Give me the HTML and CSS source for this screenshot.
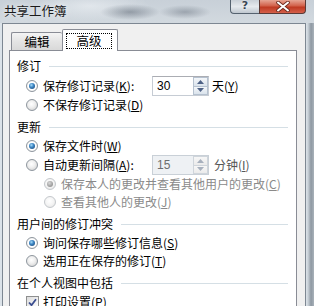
FILE: index.html
```html
<!DOCTYPE html>
<html lang="zh-CN">
<head>
<meta charset="utf-8">
<title>共享工作簿</title>
<link rel="stylesheet" href="styles.css">
</head>
<body>
<div class="window">
  <div class="titlebar">
    <span class="title">共享工作簿</span>
    <div class="caption-btns">
      <div class="btn-help">?</div>
      <div class="btn-close">
        <svg width="14" height="11" viewBox="0 0 14 11">
          <path d="M2 1.5 L12 9.5 M12 1.5 L2 9.5" stroke="#6b2a1e" stroke-width="3.6" stroke-linecap="round"/>
          <path d="M2 1.5 L12 9.5 M12 1.5 L2 9.5" stroke="#ffffff" stroke-width="2" stroke-linecap="round"/>
        </svg>
      </div>
    </div>
  </div>
  <div class="frame-body">
    <div class="client">
      <div class="tabs">
        <div class="tab">编辑</div>
        <div class="tab active"><span class="focus">高级</span></div>
      </div>
      <div class="panel">
        <div class="group">
          <div class="group-head"><span>修订</span><span class="rule"></span></div>
          <div class="row spin-row">
            <span class="radio checked"></span>
            <span class="label fixed">保存修订记录(<u>K</u>):</span>
            <div class="spin">
              <span class="spin-text">30</span>
              <span class="spin-btns">
                <span class="spin-up"><svg width="7" height="4" viewBox="0 0 7 4"><path d="M0 4 L3.5 0 L7 4 Z" fill="#4d6185"/></svg></span>
                <span class="spin-down"><svg width="7" height="4" viewBox="0 0 7 4"><path d="M0 0 L3.5 4 L7 0 Z" fill="#4d6185"/></svg></span>
              </span>
            </div>
            <span class="label after">天(<u>Y</u>)</span>
          </div>
          <div class="row">
            <span class="radio"></span>
            <span class="label">不保存修订记录(<u>D</u>)</span>
          </div>
        </div>
        <div class="group">
          <div class="group-head"><span>更新</span><span class="rule"></span></div>
          <div class="row">
            <span class="radio checked"></span>
            <span class="label">保存文件时(<u>W</u>)</span>
          </div>
          <div class="row spin-row">
            <span class="radio"></span>
            <span class="label fixed">自动更新间隔(<u>A</u>):</span>
            <div class="spin disabled">
              <span class="spin-text">15</span>
              <span class="spin-btns">
                <span class="spin-up"><svg width="7" height="4" viewBox="0 0 7 4"><path d="M0 4 L3.5 0 L7 4 Z" fill="#a7b0bd"/></svg></span>
                <span class="spin-down"><svg width="7" height="4" viewBox="0 0 7 4"><path d="M0 0 L3.5 4 L7 0 Z" fill="#a7b0bd"/></svg></span>
              </span>
            </div>
            <span class="label after dim">分钟(<u>I</u>)</span>
          </div>
          <div class="row sub">
            <span class="radio checked disabled"></span>
            <span class="label off">保存本人的更改并查看其他用户的更改(<u>C</u>)</span>
          </div>
          <div class="row sub">
            <span class="radio disabled"></span>
            <span class="label off">查看其他人的更改(<u>J</u>)</span>
          </div>
        </div>
        <div class="group">
          <div class="group-head"><span>用户间的修订冲突</span><span class="rule"></span></div>
          <div class="row">
            <span class="radio checked"></span>
            <span class="label">询问保存哪些修订信息(<u>S</u>)</span>
          </div>
          <div class="row">
            <span class="radio"></span>
            <span class="label">选用正在保存的修订(<u>T</u>)</span>
          </div>
        </div>
        <div class="group">
          <div class="group-head"><span>在个人视图中包括</span><span class="rule"></span></div>
          <div class="row">
            <span class="check">
              <svg width="9" height="9" viewBox="0 0 9 9"><path d="M1 4.5 L3.5 7.2 L8 1.2" stroke="#3a4d8f" stroke-width="1.8" fill="none"/></svg>
            </span>
            <span class="label">打印设置(<u>P</u>)</span>
          </div>
        </div>
      </div>
    </div>
  </div>
</div>
</body>
</html>
```

FILE: styles.css
```css
html, body {
  margin: 0;
  padding: 0;
}

body {
  width: 314px;
  height: 306px;
  overflow: hidden;
  font-family: "Noto Sans CJK SC", "DejaVu Sans", sans-serif;
  font-size: 12px;
  color: #000;
}

.window {
  width: 314px;
  height: 306px;
  display: flex;
  flex-direction: column;
  background:
    linear-gradient(to right, #dce3e9 0px, #dce3e9 306px, #c9d1d8 308px, #8e98a2 311px, #a9b2ba 314px);
}

.titlebar {
  height: 23px;
  flex: none;
  display: flex;
  align-items: flex-start;
  justify-content: space-between;
  padding: 0 8px 0 4px;
  background:
    radial-gradient(ellipse 30px 8px at 130px 12px, rgba(95, 105, 118, 0.55), rgba(95, 105, 118, 0) 100%),
    radial-gradient(ellipse 26px 7px at 185px 12px, rgba(95, 105, 118, 0.45), rgba(95, 105, 118, 0) 100%),
    radial-gradient(ellipse 60px 14px at 90px 6px, rgba(240, 244, 247, 0.6), rgba(240, 244, 247, 0) 100%),
    linear-gradient(to bottom, #c8d0d8, #d2d9df);
}

.title {
  line-height: 21px;
  font-size: 12.5px;
  color: #1a1a1a;
  text-shadow: 0 0 6px rgba(255, 255, 255, 0.9);
}

.caption-btns {
  display: flex;
  height: 14px;
}

.btn-help {
  width: 29px;
  height: 14px;
  box-sizing: border-box;
  border: 1px solid #55626f;
  border-top: none;
  border-right: none;
  border-bottom-left-radius: 4px;
  background: linear-gradient(to bottom, #c9d0d7, #e6eaee 50%, #bfc7cf);
  text-align: center;
  font-family: "DejaVu Sans", sans-serif;
  font-weight: bold;
  font-size: 11px;
  line-height: 12px;
  color: #3a4654;
  text-shadow: 0 0 2px #fff;
}

.btn-close {
  width: 47px;
  height: 14px;
  box-sizing: border-box;
  border: 1px solid #5a3a36;
  border-top: none;
  border-bottom-right-radius: 4px;
  background: linear-gradient(to bottom, #e6a594, #d2614a 45%, #bf3a22 55%, #d4604a);
  display: flex;
  align-items: center;
  justify-content: center;
}

.frame-body {
  flex: 1;
  display: flex;
  padding: 0 8px 0 2px;
  min-height: 0;
}

.client {
  flex: 1;
  display: flex;
  flex-direction: column;
  background: #f0f0f0;
  border: 1px solid #7d8792;
  border-bottom: none;
  min-height: 0;
}

.tabs {
  display: flex;
  align-items: flex-start;
  padding: 5px 0 0 8px;
  margin-bottom: -1px;
}

.tab {
  box-sizing: border-box;
  width: 51px;
  height: 18px;
  margin-top: 3px;
  border: 1px solid #898c95;
  border-bottom: none;
  border-right: none;
  border-radius: 2px 2px 0 0;
  background: linear-gradient(to bottom, #f4f4f4, #e4e4e4 50%, #d9d9d9);
  text-align: center;
  line-height: 17px;
  font-size: 12.5px;
}

.tab.active {
  width: 56px;
  height: 22px;
  margin-top: 0;
  margin-left: 0;
  border-right: 1px solid #898c95;
  background: #ffffff;
  position: relative;
  z-index: 1;
  display: flex;
  justify-content: flex-start;
  padding: 3px 0 0 3px;
}

.focus {
  display: block;
  box-sizing: border-box;
  width: 46px;
  height: 16px;
  border: 1px dotted #000;
  line-height: 14px;
  text-align: center;
}

.panel {
  flex: 1;
  margin: 0 8px 0 6px;
  background: #ffffff;
  border: 1px solid #898c95;
  border-bottom: none;
  padding: 5px 8px 0 7px;
}

.group + .group {
  margin-top: 3px;
}

.group-head {
  display: flex;
  align-items: center;
  height: 20px;
  line-height: 20px;
}

.rule {
  flex: 1;
  height: 1px;
  margin-left: 8px;
  background: #d5dfe5;
}

.row {
  display: flex;
  align-items: center;
  height: 18px;
  line-height: 18px;
  padding-left: 9px;
}

.row.spin-row {
  height: 20px;
}

.row.sub {
  padding-left: 27px;
}

.row.sub:first-of-type {
  margin-top: 1px;
}

.radio {
  flex: none;
  width: 12px;
  height: 12px;
  box-sizing: border-box;
  border-radius: 50%;
  border: 1px solid #8e969e;
  background: radial-gradient(circle at 45% 40%, #ffffff 0%, #f0f0f0 40%, #c9c9c9 100%);
  display: flex;
  align-items: center;
  justify-content: center;
  margin-right: 5px;
}

.radio.checked {
  background: radial-gradient(circle, #ffffff 55%, #d6d6d6 100%);
}

.radio.checked::after {
  content: "";
  width: 6px;
  height: 6px;
  border-radius: 50%;
  background: radial-gradient(circle at 40% 35%, #a8dcf8 0%, #3d86c4 40%, #163f6c 100%);
}

.radio.disabled {
  border-color: #c4c8cc;
  background: radial-gradient(circle at 45% 40%, #ffffff 0%, #f4f4f4 50%, #e0e0e0 100%);
}

.radio.checked.disabled::after {
  background: radial-gradient(circle at 40% 35%, #d8d8d8 0%, #a0a0a0 60%, #8a8a8a 100%);
}

.check {
  flex: none;
  width: 13px;
  height: 13px;
  box-sizing: border-box;
  border: 1px solid #8e8f8f;
  background: linear-gradient(135deg, #dcdcdc, #ffffff);
  display: flex;
  align-items: center;
  justify-content: center;
  margin-right: 4px;
  margin-left: 0;
}

.label {
  white-space: nowrap;
}

.label.fixed {
  width: 105px;
  margin-right: 4px;
}

.label.after {
  margin-left: 3px;
}

.label.dim {
  color: #555555;
  margin-left: 5px;
}

.label.off {
  color: #8a8a8a;
}

.spin {
  flex: none;
  width: 57px;
  height: 20px;
  box-sizing: border-box;
  display: flex;
  border: 1px solid #c6ccd4;
  border-top-color: #abadb3;
  background: #ffffff;
}

.spin-text {
  flex: 1;
  padding-left: 4px;
  line-height: 18px;
  font-family: "Liberation Sans", Arial, sans-serif;
  font-size: 12px;
}

.spin-btns {
  width: 15px;
  display: flex;
  flex-direction: column;
}

.spin-up, .spin-down {
  flex: 1;
  box-sizing: border-box;
  border: 1px solid #b5c1cf;
  background: linear-gradient(to bottom, #f4f7fa, #dae3ec);
  display: flex;
  align-items: center;
  justify-content: center;
}

.spin-down {
  border-top: none;
}

.spin.disabled {
  background: #eef1f4;
  border-color: #c9d0d7;
}

.spin.disabled .spin-text {
  color: #6d6d6d;
}

.spin.disabled .spin-up,
.spin.disabled .spin-down {
  border-color: #cfd5db;
  background: linear-gradient(to bottom, #f7f7f7, #ebebeb);
}

u {
  text-decoration: underline;
  text-underline-offset: 1px;
}
```
